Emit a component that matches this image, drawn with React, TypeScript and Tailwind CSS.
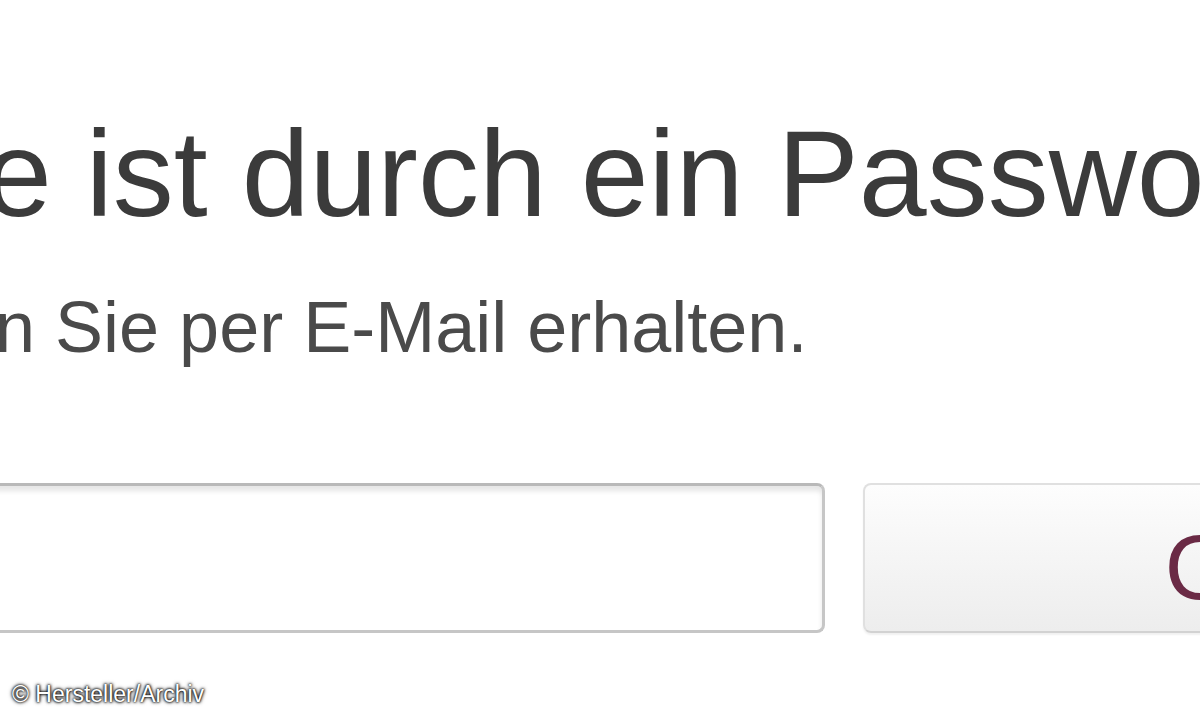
import React from "react";

export default function App() {
  return (
    <div className="relative w-[1200px] h-[720px] overflow-hidden bg-white font-['Liberation_Sans',Arial,sans-serif]">
      <div className="flex flex-col">
        <h1 className="mt-[113px] ml-[-16px] whitespace-nowrap text-[122px] leading-none font-normal text-[#3b3b3b]">
          e ist durch ein Passwort geschützt.
        </h1>
        <p className="mt-[56px] ml-[-5px] whitespace-nowrap text-[72px] leading-none text-[#4a4a4a]">
          n Sie per E-Mail erhalten.
        </p>
        <div className="mt-[120px] flex items-stretch gap-[38px] h-[150px]">
          <div className="ml-[-20px] w-[845px] shrink-0 rounded-[8px] border-[3px] border-[#c6c6c6] border-t-[#b9b9b9] bg-white shadow-[inset_0_5px_5px_rgba(0,0,0,0.10)]" />
          <button className="w-[420px] shrink-0 rounded-[8px] border-2 border-[#e0e0e0] border-b-[#d2d2d2] bg-gradient-to-b from-[#fdfdfd] to-[#ededed] pl-[300px] pt-[19px] text-left text-[90px] leading-none text-[#6a2a45] shadow-[0_2px_2px_rgba(0,0,0,0.06)]">
            OK
          </button>
        </div>
      </div>
      <div className="absolute left-[12px] top-[683px] whitespace-nowrap text-[23px] leading-none text-white [text-shadow:0_0_3px_rgba(0,0,0,1),0_0_2px_rgba(0,0,0,1),0_0_4px_rgba(0,0,0,0.8)]">
        © Hersteller/Archiv
      </div>
    </div>
  );
}
